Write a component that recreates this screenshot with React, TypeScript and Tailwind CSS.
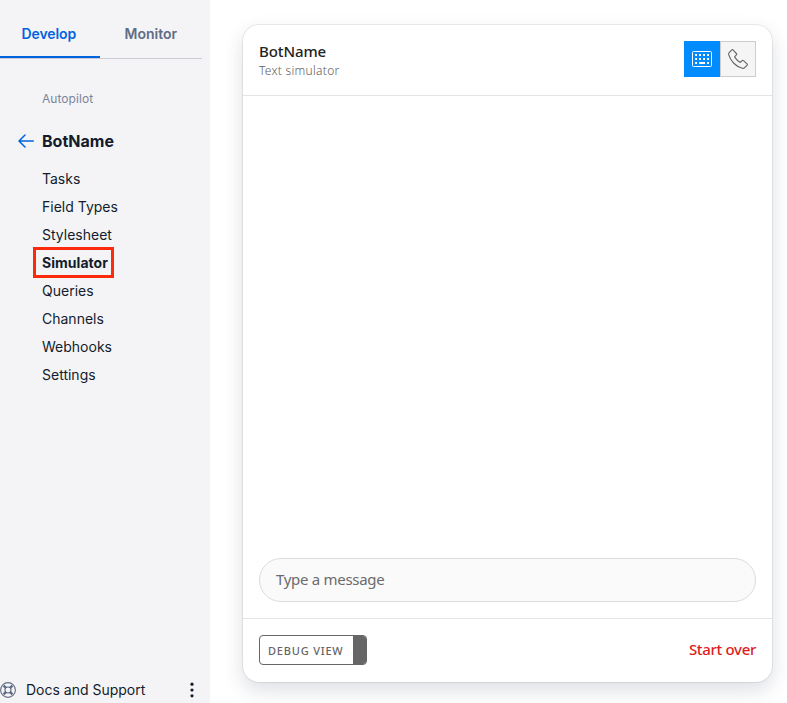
const navItems = ['Tasks', 'Field Types', 'Stylesheet', 'Simulator', 'Queries', 'Channels', 'Webhooks', 'Settings'];

function ArrowLeft() {
  return (
    <svg width="16" height="14" viewBox="0 0 16 14" fill="none" stroke="#0263e0" strokeWidth="1.5" strokeLinecap="round" strokeLinejoin="round">
      <path d="M15.3 7H1M7 1L1 7l6 6" />
    </svg>
  );
}

function SupportIcon() {
  return (
    <svg width="16" height="16" viewBox="0 0 16 16" fill="none" stroke="#606b85" strokeWidth="1.1">
      <circle cx="8" cy="8" r="7.4" />
      <circle cx="8" cy="8" r="3" />
      <path strokeWidth="2.4" d="M5.9 5.9L3.6 3.6M10.1 5.9L12.4 3.6M5.9 10.1L3.6 12.4M10.1 10.1L12.4 12.4" />
    </svg>
  );
}

function KeyboardIcon() {
  return (
    <svg width="20" height="16" viewBox="0 0 20 16" fill="none">
      <rect x="0.5" y="0.5" width="19" height="15" rx="1" stroke="white" />
      <path fill="white" d="M3 3h2v2H3zM7 3h2v2H7zM11 3h2v2h-2zM15 3h2v2h-2zM3 7h2v2H3zM7 7h2v2H7zM11 7h2v2h-2zM15 7h2v2h-2zM3 11h2v2H3zM7 11h6v2H7zM15 11h2v2h-2z" />
    </svg>
  );
}

function PhoneIcon() {
  return (
    <svg width="20" height="20" viewBox="0 0 20 20" fill="none" stroke="#666" strokeWidth="1.15" strokeLinejoin="round">
      <path d="M1.4 3.4L3.6 1.1C4.1 .6 4.7 .6 5.2 1.1L8.4 4.5C8.8 5 8.8 5.5 8.4 5.9L7 7.3C6.6 7.7 6.6 8 6.9 8.4C8 10 9.9 12 11.6 13.1C12 13.4 12.3 13.4 12.7 13L14.1 11.6C14.5 11.2 15 11.2 15.5 11.6L19 14.8C19.5 15.3 19.5 15.8 19 16.3L16.6 18.7C16 19.3 15.2 19.5 14.3 19.3C8 17.6 2.4 12 .7 5.7C.5 4.8 .7 4.1 1.4 3.4Z" />
    </svg>
  );
}

export default function App() {
  return (
    <div className="flex h-[703px] w-[787px] overflow-hidden bg-white">
      <aside className="flex w-[210px] shrink-0 flex-col bg-[#f4f4f6] font-['Inter',sans-serif] text-[#121c2d]">
        <div className="flex h-[59px] w-[202px] border-b border-[#cacdd8] text-sm font-semibold">
          <div className="h-[58px] w-[100px] border-b-2 border-[#0263e0] pt-6 pl-[21.5px] leading-5 text-[#0263e0]"><span className="tracking-[-0.1px]">Develop</span></div>
          <div className="pt-6 pl-[24.5px] leading-5 text-[#606b85]">Monitor</div>
        </div>
        <div className="mt-[30px] pl-[42px] text-xs leading-5 tracking-[0.05px] text-[#7c859b]">Autopilot</div>
        <div className="mt-5 flex h-6 items-center gap-2 pl-[18px]">
          <ArrowLeft />
          <span className="text-base font-bold">BotName</span>
        </div>
        <nav className="mt-3 flex flex-col pl-[33px] text-sm">
          {navItems.map((item) => (
            <a key={item} className={item === 'Simulator' ? '-mt-[2px] -mb-[1px] flex h-[31px] w-[81px] items-center border-[3px] border-[#fc2a0d] pl-[6px] font-bold tracking-[0.03px]' : 'flex h-7 items-center pl-[9px]'}>
              {item}
            </a>
          ))}
        </nav>
        <div className="mt-auto flex h-[26px] items-center text-sm">
          <SupportIcon />
          <span className="ml-[10px]">Docs and Support</span>
          <svg className="ml-[44px]" width="6" height="16" viewBox="0 0 6 16" fill="#121c2d">
            <circle cx="3" cy="2.2" r="1.6" />
            <circle cx="3" cy="8" r="1.6" />
            <circle cx="3" cy="13.8" r="1.6" />
          </svg>
        </div>
      </aside>
      <main className="pt-[25px] pl-[33px] font-['Noto_Sans','Open_Sans',sans-serif]">
        <section className="flex h-[657px] w-[529px] flex-col rounded-2xl bg-white shadow-[0_0_0_1px_rgba(0,0,0,0.07),0_8px_20px_rgba(40,50,80,0.16)]">
          <header className="flex h-[71px] justify-between border-b border-[#e4e4e4] px-4 pt-4">
            <div>
              <h1 className="text-[15px] leading-5 font-medium tracking-[-0.1px] text-[#222]">BotName</h1>
              <p className="pt-px text-xs leading-[18px] font-light tracking-[0.28px] text-[#606060]">Text simulator</p>
            </div>
            <div className="flex h-9">
              <button className="flex w-9 items-center justify-center bg-[#008cff]"><KeyboardIcon /></button>
              <button className="flex w-9 items-center justify-center border border-[#ccc] bg-[#f5f5f5]"><PhoneIcon /></button>
            </div>
          </header>
          <div className="flex flex-1 flex-col justify-end px-4 pb-4">
            <div className="flex h-11 items-center rounded-full border border-[#dcdcdc] bg-[#fafafa] pb-[2px] pl-4 text-[15px] tracking-[-0.3px] text-[#6b6b6b]">Type a message</div>
          </div>
          <footer className="flex h-[64px] items-center justify-between border-t border-[#e4e4e4] px-4 pb-[2px]">
            <button className="flex h-[30px] w-[108px] items-center justify-between overflow-hidden rounded border border-[#666] pl-2 text-[11px] font-medium tracking-[0.8px] text-[#666]">
              <span className="pt-[3px]">DEBUG VIEW</span>
              <span className="h-full w-[13px] bg-[#666]" />
            </button>
            <button className="text-[15px] font-medium tracking-[-0.32px] text-[#dd1d1d]">Start over</button>
          </footer>
        </section>
      </main>
    </div>
  );
}
